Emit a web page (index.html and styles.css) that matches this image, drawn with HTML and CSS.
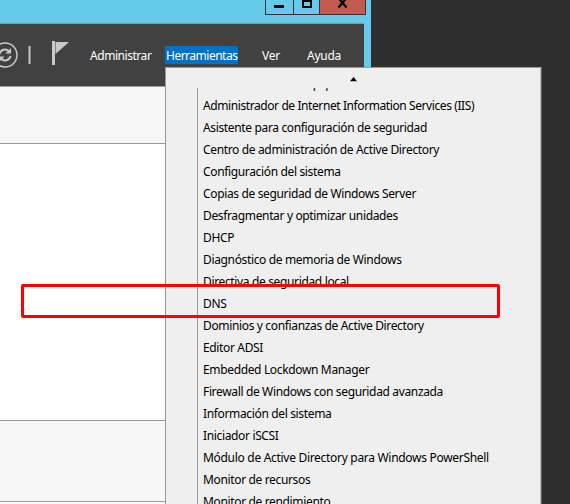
FILE: index.html
```
<!DOCTYPE html>
<html lang="es">
<head>
<meta charset="utf-8">
<title>Administrador del servidor</title>
<link rel="stylesheet" href="styles.css">
</head>
<body>
<div class="window">
  <div class="titlebar">
    <div class="caption">
      <span class="cap min"><svg width="27" height="14" viewBox="0 0 27 14"><path d="M8 5h10v3H8z"/></svg></span>
      <span class="cap max"><svg width="25" height="14" viewBox="0 0 25 14"><path fill-rule="evenodd" d="M8 -1h10v9H8zM10 2v4h6V2z"/></svg></span>
      <span class="cap close"><svg width="45" height="14" viewBox="0 0 45 14"><path d="M18.500 -2l8 9.500M26.500 -2l-8 9.500" fill="none" stroke="#000" stroke-width="2.200"/></svg></span>
    </div>
  </div>
  <div class="client">
    <header class="toolbar">
      <svg class="icons" width="80" height="62" viewBox="0 0 80 62">
        <circle cx="5" cy="31" r="12" fill="none" stroke="#c8c8c8" stroke-width="1.500"/>
        <path d="M-.5 30a5.500 5.500 0 0 1 9.500-2.500M10.500 32a5.500 5.500 0 0 1-9.500 2.500" fill="none" stroke="#c8c8c8" stroke-width="2"/>
        <path d="M11 24v5.500H5.500zM-1 38v-5.500h5.500z" fill="#c8c8c8"/>
        <path d="M28.500 22h2v18h-2zM52 17h3v24h-3zM55.500 18H69L55.500 30z" fill="#c8c8c8"/>
      </svg>
      <nav class="menubar">
        <span class="top admin">Administrar</span>
        <span class="top tools">Herramientas</span>
        <span class="top view">Ver</span>
        <span class="top help">Ayuda</span>
      </nav>
    </header>
    <section class="crumbs"></section>
    <section class="content"></section>
    <section class="panel"></section>
    <section class="rest"></section>
  </div>
</div>
<div class="dropdown">
  <div class="scroll-up"><svg width="7" height="5" viewBox="0 0 7 5"><path d="M3.500 0L7 4.300H0z"/></svg></div>
  <div class="viewport">
    <ul class="items">
      <li>Administración de equipos</li>
      <li class="tight">Administrador de Internet Information Services (IIS)</li>
      <li>Asistente para configuración de seguridad</li>
      <li>Centro de administración de Active Directory</li>
      <li>Configuración del sistema</li>
      <li>Copias de seguridad de Windows Server</li>
      <li>Desfragmentar y optimizar unidades</li>
      <li>DHCP</li>
      <li>Diagnóstico de memoria de Windows</li>
      <li>Directiva de seguridad local</li>
      <li>DNS</li>
      <li>Dominios y confianzas de Active Directory</li>
      <li>Editor ADSI</li>
      <li>Embedded Lockdown Manager</li>
      <li>Firewall de Windows con seguridad avanzada</li>
      <li>Información del sistema</li>
      <li>Iniciador iSCSI</li>
      <li class="loose">Módulo de Active Directory para Windows PowerShell</li>
      <li>Monitor de recursos</li>
      <li>Monitor de rendimiento</li>
    </ul>
  </div>
</div>
<div class="highlight"></div>
</body>
</html>
```
FILE: styles.css
```
* { box-sizing: border-box; }
body {
  margin: 0;
  width: 570px;
  height: 504px;
  overflow: hidden;
  position: relative;
  background: #2e2e2e;
  font: 12px/22px "Noto Sans", "Open Sans", sans-serif;
  letter-spacing: -0.25px;
  color: #000;
}
.window { width: 371px; height: 504px; background: #66caea; }
.titlebar { height: 23px; display: flex; justify-content: flex-end; padding-right: 5px; }
.caption { display: flex; width: 101px; height: 15px; border: 1px solid #333; border-top: 0; }
.cap { height: 14px; overflow: hidden; }
.cap svg { display: block; }
.min { width: 28px; border-right: 1px solid #333; }
.max { width: 26px; border-right: 1px solid #333; }
.close { width: 45px; background: #c35a50; }
.client { width: 364px; height: 481px; display: flex; flex-direction: column; border-top: 1px solid #8097a0; }
.toolbar { height: 63px; background: #414141; border-bottom: 1px solid #a0a0a0; display: flex; }
.icons { flex: none; }
.menubar { display: flex; padding: 22px 0 0 9px; color: #fff; }
.top { height: 18px; line-height: 19px; white-space: nowrap; }
.admin { width: 76px; padding-left: 1px; letter-spacing: -0.45px; }
.tools { width: 73px; padding-left: 1px; background: #0072c6; letter-spacing: -0.5px; }
.view { width: 45px; margin-left: 24px; }
.crumbs { height: 57px; background: #f7f7f7; border-bottom: 1px solid #999; }
.content { height: 277px; background: #fff; border-bottom: 1px solid #999; }
.panel { height: 81px; background: #f7f7f7; border-bottom: 1px solid #999; }
.rest { flex: 1; background: #fafafa; }
.dropdown {
  position: absolute;
  left: 165px;
  top: 67px;
  width: 376px;
  height: 437px;
  background: #efefef;
  border: 1px solid #999;
  border-right-color: #bbb;
  border-bottom: 0;
  box-shadow: 1px 0 0 #666;
}
.scroll-up { height: 20px; padding: 9px 0 0 184px; }
.scroll-up svg { display: block; }
.viewport { height: 416px; margin-left: 31px; border-left: 1px solid #999; overflow: hidden; }
.items { list-style: none; margin: -15px 0 0; padding: 0 0 0 5px; letter-spacing: -0.35px; }
.items li { height: 22px; white-space: nowrap; }
.items .tight { letter-spacing: -0.41px; }
.items .loose { letter-spacing: -0.3px; }
.highlight {
  position: absolute;
  left: 21px;
  top: 284px;
  width: 479px;
  height: 34px;
  border: 3px solid #f00;
  border-radius: 2px;
}
```
